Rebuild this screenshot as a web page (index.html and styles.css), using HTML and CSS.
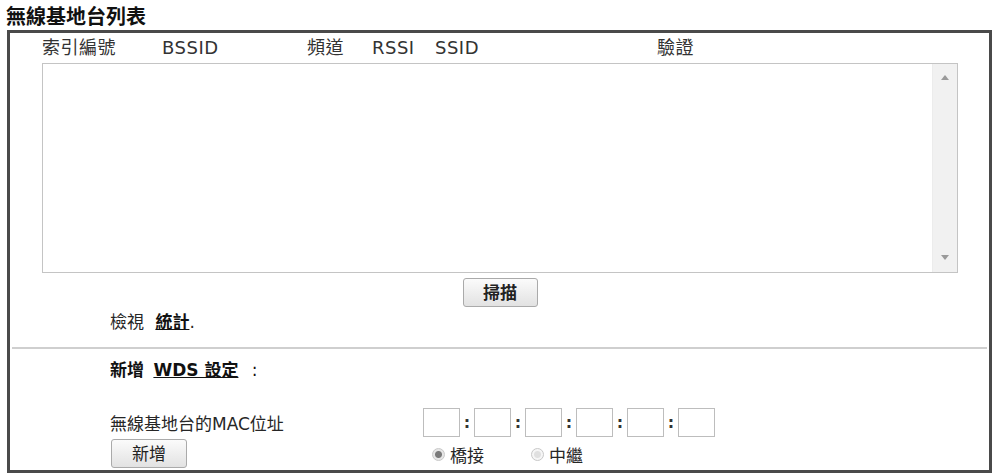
FILE: index.html
```html
<!DOCTYPE html>
<html lang="zh-Hant">
<head>
<meta charset="utf-8">
<title>無線基地台列表</title>
<link rel="stylesheet" href="styles.css">
</head>
<body>
<div class="page">
  <div class="title">無線基地台列表</div>
  <div class="box">
    <div class="head">
      <span class="c1">索引編號</span>
      <span class="c2">BSSID</span>
      <span class="c3">頻道</span>
      <span class="c4">RSSI</span>
      <span class="c5">SSID</span>
      <span class="c6">驗證</span>
    </div>
    <div class="listbox">
      <div class="list-area"></div>
      <div class="scrollbar">
        <span class="arrow up"></span>
        <span class="arrow down"></span>
      </div>
    </div>
    <div class="scan-row"><button class="btn scan">掃描</button></div>
    <div class="stats-row">檢視 <a class="link" href="#">統計</a>.</div>
    <div class="sep"></div>
    <div class="wds-row"><b>新增</b> <a class="link" href="#">WDS 設定</a> :</div>
    <div class="form-grid">
      <div class="mac-label">無線基地台的MAC位址</div>
      <div class="mac">
        <span class="mac-in"></span><span class="colon">:</span>
        <span class="mac-in"></span><span class="colon">:</span>
        <span class="mac-in"></span><span class="colon">:</span>
        <span class="mac-in"></span><span class="colon">:</span>
        <span class="mac-in"></span><span class="colon">:</span>
        <span class="mac-in"></span>
      </div>
      <div class="add-cell"><button class="btn add">新增</button></div>
      <div class="radios">
        <span class="radio on"></span><span class="rlabel">橋接</span>
        <span class="radio off"></span><span class="rlabel">中繼</span>
      </div>
    </div>
  </div>
</div>
</body>
</html>
```
FILE: styles.css
```css
* { box-sizing: border-box; }
html, body { margin: 0; padding: 0; background: #fff; }
body {
  font-family: "DejaVu Sans", "Noto Sans CJK TC", sans-serif;
  font-size: 18px;
  color: #262626;
}
.page { padding: 5px 3px 0 7px; width: 995px; }
.title {
  font-size: 20px;
  font-weight: bold;
  line-height: 25px;
  height: 25px;
  color: #111;
  margin-left: -1px;
}
.box {
  border: 3px solid #4a4a4a;
  width: 985px;
}
.head {
  display: flex;
  padding: 4px 0 0 32px;
  height: 30px;
  line-height: 22px;
  color: #333;
}
.head span { display: block; letter-spacing: 0.5px; }
.c1 { width: 120px; }
.c2 { width: 145px; }
.c3 { width: 65px; }
.c4 { width: 63px; }
.c5 { width: 222px; }
.listbox {
  margin: 0 31px 0 32px;
  height: 210px;
  border: 1px solid #c4c4c4;
  display: flex;
}
.list-area { flex: 1; }
.scrollbar {
  width: 25px;
  background: #f1f1f1;
  border-left: 1px solid #ececec;
  position: relative;
}
.arrow {
  position: absolute;
  left: 8px;
  width: 0; height: 0;
  border-left: 4px solid transparent;
  border-right: 4px solid transparent;
}
.arrow.up { top: 11px; border-bottom: 5px solid #9a9a9a; }
.arrow.down { bottom: 12px; border-top: 5px solid #9a9a9a; }
.scan-row {
  display: flex;
  justify-content: center;
  margin: 5px 0 0 1px;
}
.btn {
  font-family: "DejaVu Sans", "Noto Sans CJK TC", sans-serif;
  font-size: 17px;
  color: #222;
  height: 29px;
  border: 1px solid #aaa;
  border-radius: 3px;
  background: linear-gradient(#fbfbfb, #e2e2e2);
  padding: 0;
  line-height: 26px;
}
.scan { width: 75px; font-weight: bold; }
.stats-row {
  margin-top: 4px;
  padding-left: 100px;
  line-height: 22px;
  height: 22px;
  font-size: 17px;
}
.link {
  color: #111;
  font-weight: bold;
  text-decoration: underline;
  margin-left: 8px;
}
.stats-row .link { margin-left: 6px; }
.sep {
  margin: 14px 2px 0 2px;
  height: 2px;
  background: #cfcfcf;
}
.wds-row {
  margin-top: 10px;
  padding-left: 100px;
  line-height: 22px;
  height: 22px;
  font-size: 17px;
  color: #111;
}
.wds-row .link { margin-left: 4px; margin-right: 8px; }
.form-grid {
  margin-top: 27px;
  display: grid;
  grid-template-columns: 313px auto;
  grid-template-rows: 30px 32px;
  padding-left: 100px;
}
.mac-label {
  align-self: center;
  font-size: 17px;
  line-height: 22px;
  padding-top: 1px;
}
.mac { display: flex; align-items: center; height: 29px; }
.mac-in {
  display: block;
  width: 37px;
  height: 29px;
  border: 1px solid #bdbdbd;
  background: #fff;
}
.colon {
  display: block;
  width: 14px;
  text-align: center;
  font-weight: bold;
  font-size: 16px;
  color: #333;
}
.add-cell { padding: 1px 0 0 1px; }
.add { width: 76px; }
.radios {
  display: flex;
  align-items: center;
  padding-left: 9px;
  font-size: 17px;
  height: 30px;
  padding-top: 2px;
}
.radio {
  display: block;
  width: 13px;
  height: 13px;
  border-radius: 50%;
  border: 1px solid #c8c8c8;
  background: #f2f2f2;
  margin-right: 5px;
}
.radio.on { background: radial-gradient(circle, #7a7a7a 0 3px, #e6e6e6 4px); }
.radio.off { background: radial-gradient(circle, #e0e0e0 0 3px, #f6f6f6 4px); }
.rlabel { margin-right: 47px; }
```
